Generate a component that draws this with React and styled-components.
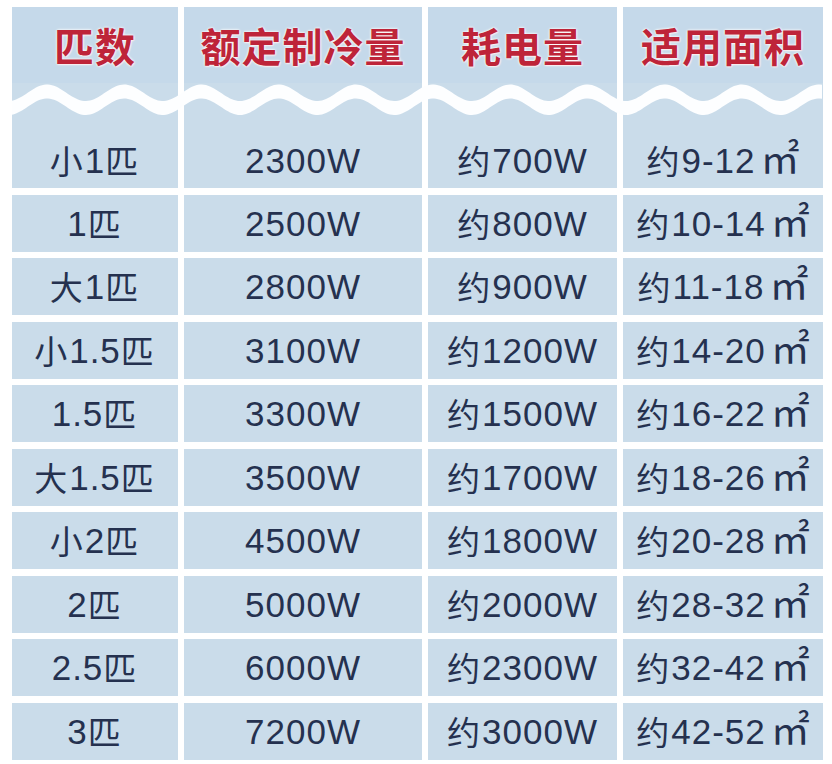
import React from "react";
import styled, { createGlobalStyle } from "styled-components";

const GlobalStyle = createGlobalStyle`
  html, body {
    margin: 0;
    padding: 0;
    background: #ffffff;
  }
  body {
    width: 832px;
    height: 764px;
    overflow: hidden;
    font-family: "Liberation Sans", "Noto Sans CJK SC", sans-serif;
  }
`;

const Page = styled.div`
  width: 832px;
  height: 764px;
  box-sizing: border-box;
  padding: 7px 9px 0 12px;
  display: flex;
  flex-direction: column;
  gap: 6.5px;
`;

const TopBlock = styled.div`
  position: relative;
  display: flex;
  flex-direction: column;
`;

const Row = styled.div`
  display: grid;
  grid-template-columns: 166px 238px 189px 200px;
  column-gap: 6px;
  height: ${(p) => p.$height || 57}px;
`;

const Cell = styled.div`
  background: ${(p) => (p.$head ? "#c5d9ea" : "#cadcea")};
  display: flex;
  align-items: center;
  justify-content: center;
  box-sizing: border-box;
  padding-top: ${(p) => p.$offset || 0}px;
  color: #25314f;
  font-size: 35px;
  line-height: 1;
  letter-spacing: 1px;
  white-space: nowrap;
`;

const HeadText = styled.span`
  font-family: "Noto Sans CJK SC", sans-serif;
  font-weight: 700;
  font-size: 40px;
  color: #be2439;
  letter-spacing: 1px;
  text-shadow: 0 0 2px #ffffff, 0 0 3px #ffffff, 1px 1px 1px #f3d9de;
`;

const Han = styled.span`
  font-family: "Noto Sans CJK SC", sans-serif;
  font-size: 33px;
  letter-spacing: 0;
  margin-right: 2px;
`;

const Unit = styled.span`
  font-family: "Noto Sans CJK SC", sans-serif;
  font-size: 39px;
  letter-spacing: 0;
  margin-left: 5px;
  margin-bottom: 8px;
`;

const WaveSvg = styled.svg`
  position: absolute;
  left: 0;
  top: 66px;
  pointer-events: none;
`;

const headers = ["匹数", "额定制冷量", "耗电量", "适用面积"];

const rows = [
  ["小", "1", "匹", "2300W", "700W", "9-12"],
  ["", "1", "匹", "2500W", "800W", "10-14"],
  ["大", "1", "匹", "2800W", "900W", "11-18"],
  ["小", "1.5", "匹", "3100W", "1200W", "14-20"],
  ["", "1.5", "匹", "3300W", "1500W", "16-22"],
  ["大", "1.5", "匹", "3500W", "1700W", "18-26"],
  ["小", "2", "匹", "4500W", "1800W", "20-28"],
  ["", "2", "匹", "5000W", "2000W", "28-32"],
  ["", "2.5", "匹", "6000W", "2300W", "32-42"],
  ["", "3", "匹", "7200W", "3000W", "42-52"],
];

// white wavy band across the header
const wavePath = () => {
  const w = 811;
  const period = 77.2;
  const x0 = 35;
  const top = [];
  const bottom = [];
  for (let x = 0; x <= w; x += 2) {
    const yc = 26.75 - 8.25 * Math.cos((2 * Math.PI * (x - x0)) / period);
    top.push(`${x},${(yc - 7).toFixed(2)}`);
    bottom.push(`${x},${(yc + 7).toFixed(2)}`);
  }
  return "M" + top.join(" L") + " L" + bottom.reverse().join(" L") + " Z";
};

const DataRow = ({ r, height, offset }) => (
  <Row $height={height}>
    <Cell $offset={offset}>
      {r[0] && <Han>{r[0]}</Han>}
      {r[1]}
      <Han>{r[2]}</Han>
    </Cell>
    <Cell $offset={offset}>{r[3]}</Cell>
    <Cell $offset={offset}>
      <Han>约</Han>
      {r[4]}
    </Cell>
    <Cell $offset={offset}>
      <Han>约</Han>
      {r[5]}
      <Unit>㎡</Unit>
    </Cell>
  </Row>
);

const App = () => {
  return (
    <>
      <GlobalStyle />
      <Page>
        <TopBlock>
          <Row $height={76}>
            {headers.map((h) => (
              <Cell $head key={h}>
                <HeadText>{h}</HeadText>
              </Cell>
            ))}
          </Row>
          <DataRow r={rows[0]} height={105} offset={49} />
          <WaveSvg width="811" height="54" viewBox="0 0 811 54">
            <path d={wavePath()} fill="#fdfeff" />
          </WaveSvg>
        </TopBlock>
        {rows.slice(1).map((r) => (
          <DataRow r={r} key={r[3]} />
        ))}
      </Page>
    </>
  );
};

export default App;
